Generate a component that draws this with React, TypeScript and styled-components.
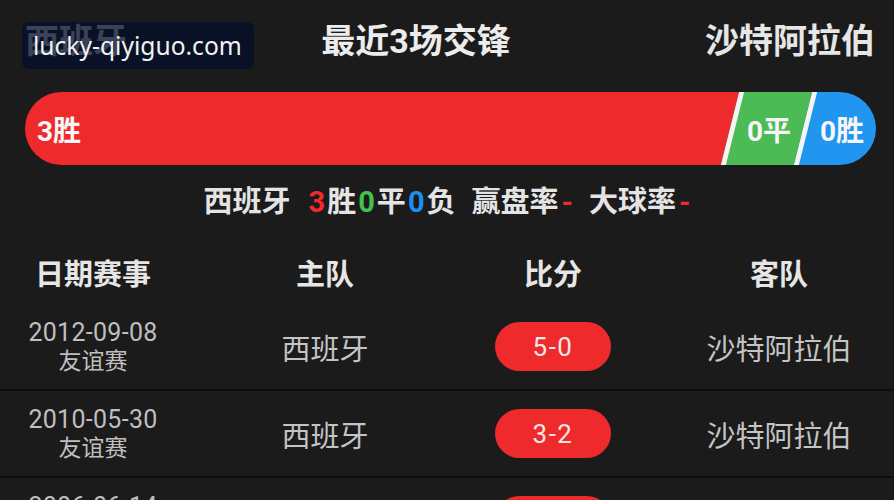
import React from 'react';
import styled, { createGlobalStyle } from 'styled-components';

const Global = createGlobalStyle`
  html, body { margin: 0; padding: 0; background: #1b1b1b; }
  body { font-family: Roboto, "Noto Sans CJK SC", sans-serif; overflow: hidden; }
`;

const Page = styled.div`
  position: relative;
  width: 894px;
  height: 500px;
  background: #1b1b1b;
  overflow: hidden;
`;

const TopRow = styled.div`
  display: flex;
  align-items: center;
  justify-content: space-between;
  padding: 20px 19px 0 25px;
  height: 42px;
`;

const TeamTitle = styled.div`
  font-size: 34px;
  font-weight: 700;
  color: #e6e6e6;
  line-height: 42px;
`;

const MainTitle = styled(TeamTitle)`
  color: #ececec;
`;

// site watermark sitting over the home team name
const Watermark = styled.div`
  position: absolute;
  top: 22px;
  left: 22px;
  height: 47px;
  padding: 0 12px 0 11px;
  display: flex;
  align-items: center;
  border-radius: 7px;
  background: rgba(4, 14, 44, 0.76);
  font-family: "Noto Sans", sans-serif;
  font-size: 24.6px;
  color: #f2f2f2;
`;

const Bar = styled.div`
  display: flex;
  height: 73px;
  margin: 30px 18px 0 25px;
  border-radius: 37px;
  overflow: hidden;
`;

const Segment = styled.div<{ $color: string; $grow?: boolean; $w?: number; $first?: boolean; $last?: boolean }>`
  display: flex;
  align-items: center;
  justify-content: ${p => (p.$first ? 'flex-start' : 'center')};
  flex: ${p => (p.$grow ? '1 1 auto' : `0 0 ${p.$w}px`)};
  box-sizing: border-box;
  background: ${p => p.$color};
  transform: skewX(-14deg);
  ${p => (p.$first ? 'margin-left: -20px; padding-left: 32px;' : 'border-left: 5px solid #f4f4f4;')}
  ${p => (p.$last ? 'margin-right: -20px; padding-right: 20px;' : '')}
`;

const SegLabel = styled.span`
  transform: skewX(14deg);
  font-size: 28px;
  font-weight: 700;
  color: #f6f6f6;
`;

const Summary = styled.div`
  display: flex;
  justify-content: center;
  gap: 16px;
  margin-top: 17px;
  height: 40px;
  line-height: 40px;
  font-size: 29px;
  font-weight: 700;
  color: #e4e4e4;
`;

const Num = styled.span<{ $color: string }>`
  color: ${p => p.$color};
  padding: 0 2px;
`;

const Dash = styled.span`
  color: #ef2a2d;
  margin-left: 3px;
`;

const cols = '234px 230px 226px 226px';

const TableHead = styled.div`
  display: grid;
  grid-template-columns: ${cols};
  margin: 18px 0 0 -24px;
  height: 64px;
  align-items: center;
  text-align: center;
  font-size: 29px;
  font-weight: 700;
  color: #e6e6e6;
`;

const Row = styled.div`
  display: grid;
  grid-template-columns: ${cols};
  margin-left: -24px;
  width: 940px;
  height: 85px;
  align-items: center;
  justify-items: center;
  text-align: center;
  border-bottom: 2px solid #0e0e0e;
  color: #c2c2c2;
`;

const DateCell = styled.div`
  display: flex;
  flex-direction: column;
  align-items: center;
  color: #bfbfbf;
`;

const DateText = styled.span`
  font-size: 25px;
  line-height: 29px;
  letter-spacing: 0.3px;
`;

const TypeText = styled.span`
  font-size: 23px;
  line-height: 29px;
`;

const TeamCell = styled.div`
  font-size: 29px;
  color: #c4c4c4;
`;

const ScorePill = styled.div`
  width: 116px;
  height: 49px;
  border-radius: 25px;
  background: #ee2a2d;
  display: flex;
  align-items: center;
  justify-content: center;
  font-size: 26px;
  letter-spacing: 1.5px;
  color: #f6e6e6;
`;

const matches = [
  { date: '2012-09-08', type: '友谊赛', home: '西班牙', score: '5-0', away: '沙特阿拉伯' },
  { date: '2010-05-30', type: '友谊赛', home: '西班牙', score: '3-2', away: '沙特阿拉伯' },
  { date: '2006-06-14', type: '友谊赛', home: '西班牙', score: '1-0', away: '沙特阿拉伯' },
];

export default function App() {
  return (
    <Page>
      <Global />
      <TopRow>
        <TeamTitle>西班牙</TeamTitle>
        <MainTitle>最近3场交锋</MainTitle>
        <TeamTitle>沙特阿拉伯</TeamTitle>
      </TopRow>
      <Watermark>lucky-qiyiguo.com</Watermark>

      <Bar>
        <Segment $color="#ef2a2d" $grow $first>
          <SegLabel>3胜</SegLabel>
        </Segment>
        <Segment $color="#4cbb55" $w={73}>
          <SegLabel>0平</SegLabel>
        </Segment>
        <Segment $color="#2196f0" $w={93} $last>
          <SegLabel>0胜</SegLabel>
        </Segment>
      </Bar>

      <Summary>
        <span>西班牙</span>
        <span>
          <Num $color="#ef2a2d">3</Num>胜<Num $color="#43c04e">0</Num>平<Num $color="#1f8fef">0</Num>负
        </span>
        <span>
          赢盘率<Dash>-</Dash>
        </span>
        <span>
          大球率<Dash>-</Dash>
        </span>
      </Summary>

      <TableHead>
        <div>日期赛事</div>
        <div>主队</div>
        <div>比分</div>
        <div>客队</div>
      </TableHead>

      {matches.map(m => (
        <Row key={m.date}>
          <DateCell>
            <DateText>{m.date}</DateText>
            <TypeText>{m.type}</TypeText>
          </DateCell>
          <TeamCell>{m.home}</TeamCell>
          <ScorePill>{m.score}</ScorePill>
          <TeamCell>{m.away}</TeamCell>
        </Row>
      ))}
    </Page>
  );
}
